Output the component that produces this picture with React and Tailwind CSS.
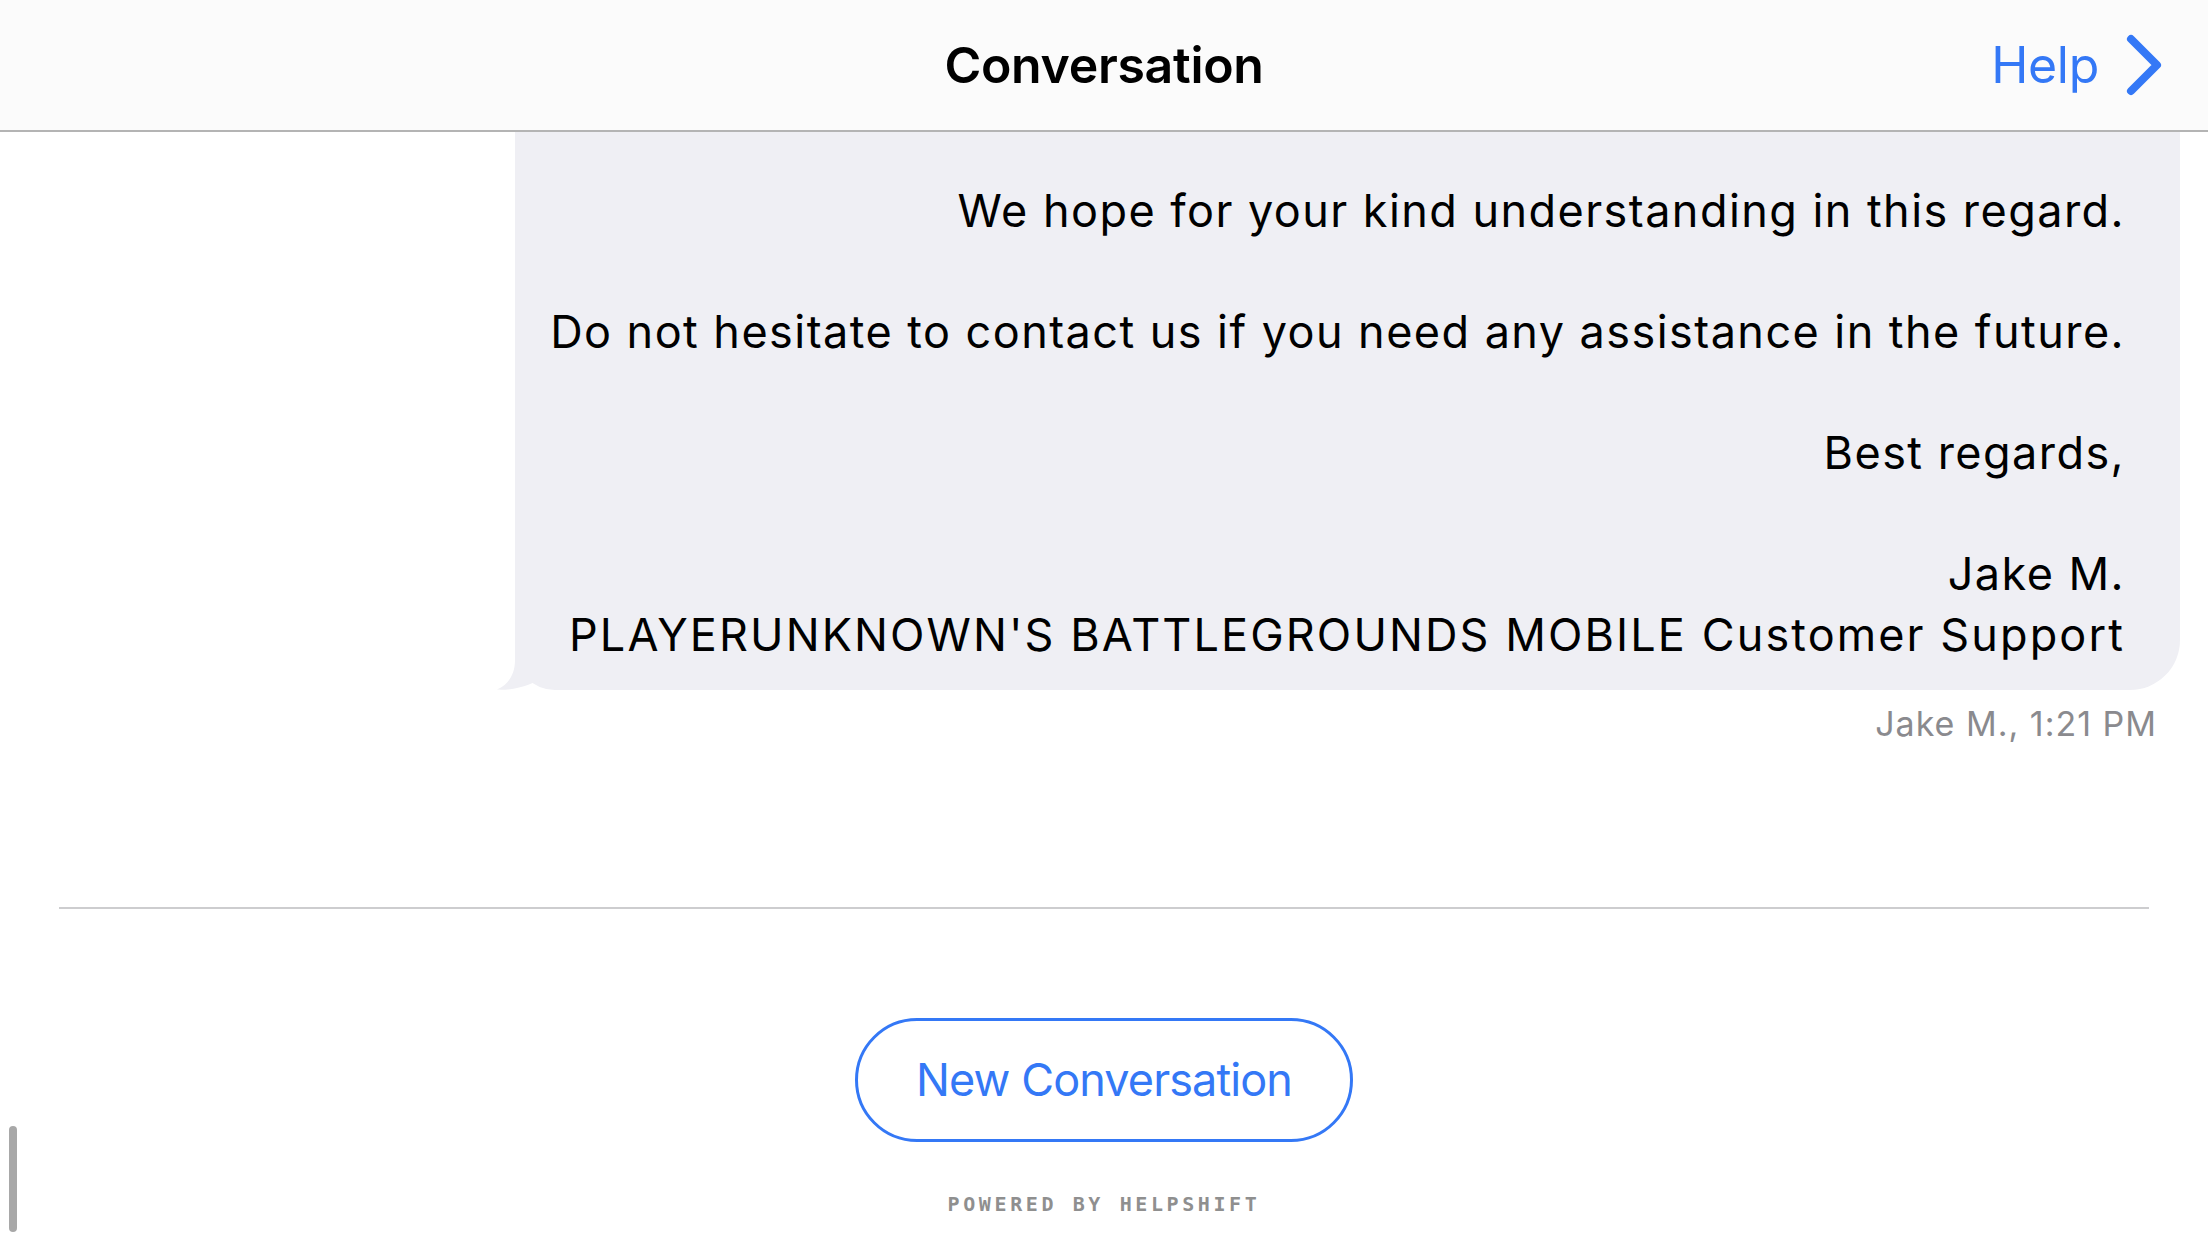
import React from "react";

export default function App() {
  return (
    <div
      className="relative w-[2208px] h-[1242px] overflow-hidden bg-white flex flex-col text-black"
      style={{ fontFamily: 'Inter, "Noto Sans", sans-serif' }}
    >
      {/* Header */}
      <div className="relative z-10 h-[132px] shrink-0 bg-[#fbfbfb] border-b-2 border-[#b4b4b4] grid grid-cols-[1fr_auto_1fr] items-center">
        <div />
        <div className="text-[50px] font-semibold tracking-[-0.3px]">Conversation</div>
        <div className="flex justify-end items-center pr-[44px]">
          <span className="text-[50px] text-[#3478f6] tracking-[-0.3px] mr-[27px]">Help</span>
          <svg width="38" height="62" viewBox="0 0 38 62" className="block">
            <path
              d="M5 5 L31 31 L5 57"
              fill="none"
              stroke="#3478f6"
              strokeWidth="8"
              strokeLinecap="round"
              strokeLinejoin="round"
            />
          </svg>
        </div>
      </div>

      {/* Message bubble */}
      <div className="flex justify-end pr-[28px]">
        <div className="relative w-[1665px] bg-[#efeff4] rounded-br-[50px] rounded-bl-[40px] pt-[49px] pb-[25px] pr-[55px] text-right text-[45px] leading-[60.5px] tracking-[1.45px]">
          <p>We hope for your kind understanding in this regard.</p>
          <p>&nbsp;</p>
          <p>Do not hesitate to contact us if you need any assistance in the future.</p>
          <p>&nbsp;</p>
          <p>Best regards,</p>
          <p>&nbsp;</p>
          <p>Jake M.</p>
          <p className="tracking-[2.1px]">PLAYERUNKNOWN'S BATTLEGROUNDS MOBILE Customer Support</p>
          <svg
            width="70"
            height="40"
            viewBox="0 0 70 40"
            className="absolute left-[-18px] bottom-0 block"
          >
            <path
              d="M18 0 L18 10 C18 24 12 34 0 39.6 C13 40.5 30 37 41 30 C48 36 55 40 66 40 L70 40 L70 0 Z"
              fill="#efeff4"
            />
          </svg>
        </div>
      </div>

      {/* Timestamp */}
      <div className="mt-[14px] pr-[51px] text-right text-[34px] leading-[40px] tracking-[1px] text-[#8a8a8e]">
        Jake M., 1:21 PM
      </div>

      {/* Separator */}
      <div className="mt-[163px] mx-[59px] h-[2px] bg-[#cdcdcf]" />

      {/* New conversation button */}
      <div className="mt-[109px] flex justify-center">
        <button className="w-[498px] h-[124px] rounded-full border-[3px] border-[#3478f6] bg-white text-[45px] text-[#3478f6] tracking-[-0.9px] flex items-center justify-center">
          New Conversation
        </button>
      </div>

      {/* Powered by */}
      <div
        className="mt-[52px] text-center text-[20px] leading-[20px] font-bold tracking-[3.6px] text-[#8f8f8f]"
        style={{ fontFamily: '"DejaVu Sans Mono", "Liberation Mono", monospace' }}
      >
        POWERED BY HELPSHIFT
      </div>

      {/* Scroll indicator */}
      <div className="absolute left-[9px] top-[1126px] w-[8px] h-[106px] rounded-full bg-[#a8a8a8]" />
    </div>
  );
}
